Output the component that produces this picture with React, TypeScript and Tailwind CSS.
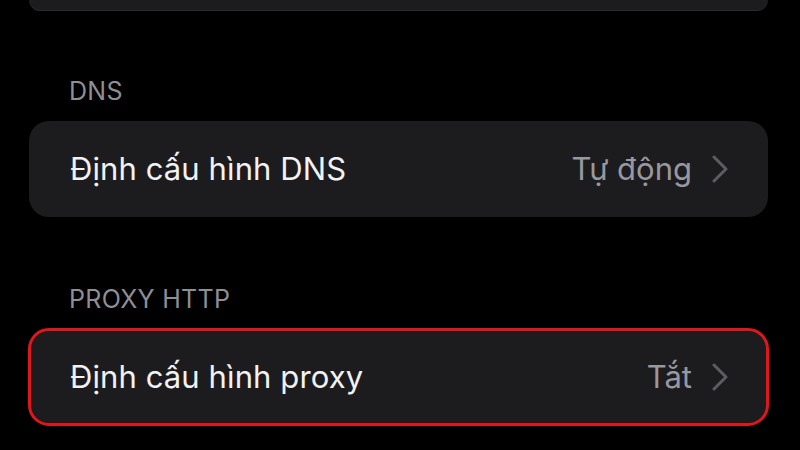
import { ReactNode } from 'react'

function Chevron() {
  return (
    <svg width="16" height="28" viewBox="0 0 16 28" className="shrink-0">
      <polyline
        points="2,2 14,14 2,26"
        fill="none"
        stroke="#5c5c61"
        strokeWidth="3"
        strokeLinecap="round"
        strokeLinejoin="round"
      />
    </svg>
  )
}

function Row({ label, value, highlight }: { label: string; value: string; highlight?: boolean }) {
  return (
    <div
      className={
        'flex items-center justify-between h-[96px] rounded-[20px] bg-[#1c1c1e] pl-[41px] pr-[40px] ' +
        (highlight ? 'outline-[3px] outline outline-[#e0161c] -outline-offset-[2px]' : '')
      }
    >
      <span className="text-[31px] text-[#f2f2f4] tracking-[0.1px]">{label}</span>
      <div className="flex items-center gap-[20px]">
        <span className="text-[31px] text-[#98989e]">{value}</span>
        <Chevron />
      </div>
    </div>
  )
}

function Section({ title, children }: { title: string; children: ReactNode }) {
  return (
    <div className="flex flex-col">
      <div className="pl-[40px] text-[25px] leading-[28px] tracking-[0.3px] text-[#8e8e93] mb-[16px]">{title}</div>
      {children}
    </div>
  )
}

export default function App() {
  return (
    <main
      className="w-[800px] h-[450px] overflow-hidden bg-black pl-[29px] pr-[32px]"
      style={{ fontFamily: 'Inter, "Noto Sans", sans-serif' }}
    >
      <div className="h-[11px] rounded-b-[20px] bg-[#1c1c1e] border-b border-[#2a2a2d]" />
      <div className="flex flex-col gap-[68px] pt-[66px]">
        <Section title="DNS">
          <Row label="Định cấu hình DNS" value="Tự động" />
        </Section>
        <Section title="PROXY HTTP">
          <Row label="Định cấu hình proxy" value="Tắt" highlight />
        </Section>
      </div>
    </main>
  )
}
